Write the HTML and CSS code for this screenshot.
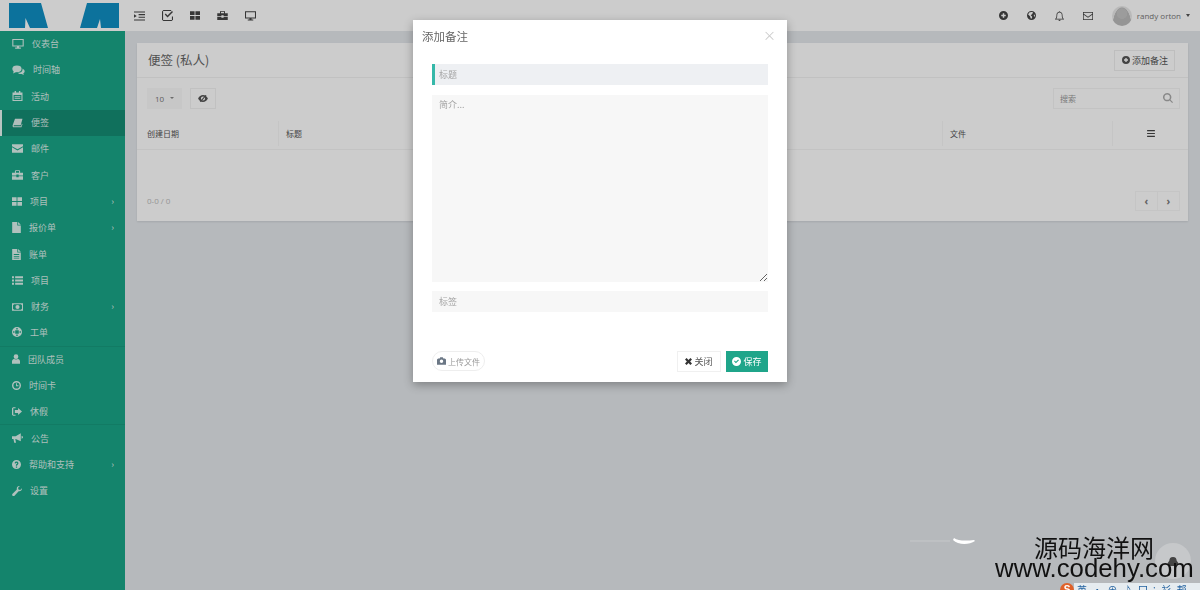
FILE: index.html
```html
<!DOCTYPE html>
<html lang="zh-CN">
<head>
  <meta charset="UTF-8">
  <title>便签 (私人)</title>
  <link rel="stylesheet" href="styles.css">
</head>
<body>

  <svg class="sprite" xmlns="http://www.w3.org/2000/svg">
    <symbol id="i-desktop" viewBox="0 0 16 14"><path fill-rule="evenodd" d="M0 0h16v10.5H9.5V12H12v1.6H4V12h2.500v-1.500H0zM1.500 1.500v7.500h13V1.500z"/></symbol>
    <symbol id="i-comments" viewBox="0 0 16 13"><ellipse cx="6" cy="5" rx="6" ry="4.500"/><path d="M2 7.500 1 11l4-2z"/><path d="M13 4.500c2 1 3 2.500 3 3.700 0 1.300-.8 2.300-1.800 3l.8 1.800-3-1.300c-2 .3-4-.2-5-1.500 4 .2 7-2.300 6-5.700z"/></symbol>
    <symbol id="i-calendar" viewBox="0 0 14 14"><path fill-rule="evenodd" d="M3 0h2v2h4V0h2v2h3v12H0V2h3zM1.500 5.500v7h11v-7z"/><path d="M3 7h8v1.200H3zM3 9.500h8v1.200H3z"/></symbol>
    <symbol id="i-book" viewBox="0 0 14 14"><path fill-rule="evenodd" d="M3.500 1H14l-2.500 9H2.200c-.6 0-.8 1.500 0 1.500H12l1-3.500 1 .5L12.500 13H1.800C.6 13-.2 11.500.2 10z"/></symbol>
    <symbol id="i-envelope" viewBox="0 0 14 11"><path d="M0 0h14v2.500L7 6.500 0 2.500z"/><path d="M0 3.800 7 8l7-4.200V11H0z"/></symbol>
    <symbol id="i-envelope-o" viewBox="0 0 14 11"><path fill-rule="evenodd" d="M0 0h14v11H0zM1 1v1.500L7 6.500l6-4V1zM1 3.700V10h12V3.700L7 7.800z"/></symbol>
    <symbol id="i-briefcase" viewBox="0 0 14 12"><path d="M4.500 0h5l.8.8V3H14v3.500H8.500V5.500h-3v1H0V3h3.700V.8zM5 1v2h4V1zM0 7.500h5.500V9h3V7.500H14V12H0z"/></symbol>
    <symbol id="i-th" viewBox="0 0 14 12"><path d="M0 0h6.400v5.400H0zM7.600 0H14v5.400H7.600zM0 6.600h6.400V12H0zM7.600 6.600H14V12H7.600z"/></symbol>
    <symbol id="i-file" viewBox="0 0 11 14"><path d="M0 0h6.500v4.500H11V14H0zM7.500 0 11 3.500H7.500z"/></symbol>
    <symbol id="i-file-text" viewBox="0 0 11 14"><path fill-rule="evenodd" d="M0 0h6.500v4.500H11V14H0zM2 6.500v1h7v-1zM2 8.800v1h7v-1zM2 11v1h7v-1z"/><path d="M7.500 0 11 3.500H7.500z"/></symbol>
    <symbol id="i-list" viewBox="0 0 14 11"><path d="M0 0h2.500v2.500H0zM4 0h10v2.500H4zM0 4.200h2.500v2.500H0zM4 4.200h10v2.500H4zM0 8.500h2.500V11H0zM4 8.500h10V11H4z"/></symbol>
    <symbol id="i-money" viewBox="0 0 16 11"><path fill-rule="evenodd" d="M0 0h16v11H0zM3 1.500 1.500 3v5L3 9.500h10L14.500 8V3L13 1.500zM8 2.500a3 3 0 1 1 0 6 3 3 0 0 1 0-6z"/></symbol>
    <symbol id="i-ring" viewBox="0 0 14 14"><path fill-rule="evenodd" d="M7 0a7 7 0 1 1 0 14A7 7 0 0 1 7 0zM4.500 4.500v5h5v-5zM6 1.500v2h2v-2zM6 10.500v2h2v-2zM1.500 6v2h2V6zM10.500 6v2h2V6z"/></symbol>
    <symbol id="i-user" viewBox="0 0 12 14"><circle cx="6" cy="3.500" r="3.500"/><path d="M0 14v-3.500C0 8.500 1.500 7 3 7c1.500 1 4.500 1 6 0 1.500 0 3 1.500 3 3.500V14z"/></symbol>
    <symbol id="i-clock" viewBox="0 0 14 14"><path fill-rule="evenodd" d="M7 0a7 7 0 1 1 0 14A7 7 0 0 1 7 0zM7 2.200a4.800 4.800 0 1 0 0 9.600 4.800 4.800 0 0 0 0-9.600z"/><path d="M6.300 3.500h1.400v3.300h2.300v1.400H6.300z"/></symbol>
    <symbol id="i-signout" viewBox="0 0 14 12"><path d="M0 1.500 1.500 0H5v1.500H1.800v9H5V12H1.500L0 10.500z"/><path d="M8.500 1 14 6l-5.500 5V8H4V4h4.500z"/></symbol>
    <symbol id="i-bullhorn" viewBox="0 0 15 13"><path d="M0 4h5l7-4v11L5 8H4.500l1 5H3L2 8H0z"/><path d="M13 3.500c1.300.5 2 1.200 2 2s-.7 1.500-2 2z"/></symbol>
    <symbol id="i-question" viewBox="0 0 14 14"><path fill-rule="evenodd" d="M7 0a7 7 0 1 1 0 14A7 7 0 0 1 7 0zM6 10v2h2v-2zM7 2.500C5.300 2.500 4.200 3.300 4 5l1.800.4c.1-.8.5-1.200 1.200-1.200.6 0 1 .3 1 .8 0 1-2 1.200-2 3.500V9h2v-.4c0-1.300 2-1.600 2-3.700 0-1.500-1.300-2.400-3-2.400z"/></symbol>
    <symbol id="i-wrench" viewBox="0 0 14 14"><path d="M13.800 3.200c.5 2.500-1.800 4.800-4.500 4L3.500 13.500c-.8.800-2 .8-2.700 0-.8-.8-.8-1.900 0-2.700l6-6C6 2.200 8.300-.4 10.800.2L8.500 2.500l.5 2.500 2.500.5z"/></symbol>
    <symbol id="i-indent" viewBox="0 0 12 10"><path d="M0 0h12v1.200H0zM5 2.900h7v1.200H5zM5 5.800h7V7H5zM0 8.800h12V10H0zM0 3l3 2-3 2z"/></symbol>
    <symbol id="i-check" viewBox="0 0 12 12"><path fill-rule="evenodd" d="M1.500 0H10v1.200H1.200v9.600h9.600V7H12v3.500L10.500 12h-9L0 10.500v-9z"/><path d="m3 5 1.100-1.100 1.900 2L10.900 1 12 2.100 6 8.100z"/></symbol>
    <symbol id="i-plus-circle" viewBox="0 0 12 12"><path fill-rule="evenodd" d="M6 0a6 6 0 1 1 0 12A6 6 0 0 1 6 0zM5 3v2H3v2h2v2h2V7h2V5H7V3z"/></symbol>
    <symbol id="i-globe" viewBox="0 0 12 12"><path fill-rule="evenodd" d="M6 0a6 6 0 1 1 0 12A6 6 0 0 1 6 0zM3 2 1.500 4.500 4 7l1 3h1.500L7 7.500 5 5.500 7 4 8 1.800C6.500 1 4.500 1 3 2zM9 5l.5 3 1-1.500V5z"/></symbol>
    <symbol id="i-bell" viewBox="0 0 12 13"><path fill-rule="evenodd" d="M6 0c.5 0 .8.3.8.8C9 1.200 10 3 10 5c0 3 .8 4.500 2 5.500V11H0v-.5C1.200 9.500 2 8 2 5c0-2 1-3.800 3.200-4.200C5.200.3 5.500 0 6 0zM6 1.800C4 1.800 3 3.200 3 5c0 2.200-.4 3.800-1.200 5h8.400C9.400 8.800 9 7.200 9 5c0-1.800-1-3.200-3-3.200z"/><path d="M4.500 11.500h3C7.500 12.400 6.800 13 6 13s-1.500-.6-1.500-1.500z"/></symbol>
    <symbol id="i-eye" viewBox="0 0 14 10"><path fill-rule="evenodd" d="M7 0c3 0 5.500 2 7 5-1.500 3-4 5-7 5S1.500 8 0 5c1.500-3 4-5 7-5zM7 2a3 3 0 1 0 0 6 3 3 0 0 0 0-6z"/><path d="M10.500 0 12 .8 4 10l-1.500-.8z"/></symbol>
    <symbol id="i-search" viewBox="0 0 12 12"><path fill-rule="evenodd" d="M5 0a5 5 0 0 1 4 8l3 3-1 1-3-3A5 5 0 1 1 5 0zM5 1.800a3.200 3.200 0 1 0 0 6.400 3.200 3.200 0 0 0 0-6.400z"/></symbol>
    <symbol id="i-bars" viewBox="0 0 10 9"><path d="M0 0h10v1.500H0zM0 3.700h10v1.500H0zM0 7.500h10V9H0z"/></symbol>
    <symbol id="i-camera" viewBox="0 0 12 10"><path fill-rule="evenodd" d="M1.500 1.500H3.500L4.300 0h3.400l.8 1.500h2L12 3v7H0V3zM6 3a2.300 2.300 0 1 0 0 4.600A2.300 2.300 0 0 0 6 3z"/></symbol>
    <symbol id="i-times" viewBox="0 0 10 10"><path d="M2.300 0 5 2.700 7.700 0 10 2.300 7.300 5 10 7.700 7.700 10 5 7.300 2.300 10 0 7.700 2.700 5 0 2.300z"/></symbol>
    <symbol id="i-check-circle" viewBox="0 0 12 12"><path fill-rule="evenodd" d="M6 0a6 6 0 1 1 0 12A6 6 0 0 1 6 0zM3.800 4.600 2.700 5.700 5.200 8.300l4.100-4-1.100-1.100-3 3z"/></symbol>
  </svg>

  <header class="topbar">
    <div class="logo">
      <svg width="110" height="25" viewBox="0 0 110 25"><path fill="#0f8fc4" d="M0 0h32l7 25H21l-4.500-10-.5 10H0zM78 0h32v25H92l-1-9-3 9H71z"/></svg>
    </div>
    <nav class="top-left">
      <svg width="11" height="10"><use href="#i-indent"/></svg>
      <svg width="11" height="11"><use href="#i-check"/></svg>
      <svg width="10" height="9"><use href="#i-th"/></svg>
      <svg width="11" height="9"><use href="#i-briefcase"/></svg>
      <svg width="11" height="10"><use href="#i-desktop"/></svg>
    </nav>
    <nav class="top-right">
      <svg width="9" height="9"><use href="#i-plus-circle"/></svg>
      <svg width="9" height="9"><use href="#i-globe"/></svg>
      <svg width="9" height="10"><use href="#i-bell"/></svg>
      <svg width="10" height="8"><use href="#i-envelope-o"/></svg>
      <div class="user">
        <span class="avatar"></span>
        <span>randy orton</span>
        <i class="caret"></i>
      </div>
    </nav>
  </header>

  <div class="main">
    <aside class="sidebar">
      <a class="side-item"><svg width="12" height="10"><use href="#i-desktop"/></svg>仪表台</a>
      <a class="side-item"><svg width="13" height="10"><use href="#i-comments"/></svg>时间轴</a>
      <a class="side-item"><svg width="11" height="10"><use href="#i-calendar"/></svg>活动</a>
      <a class="side-item active"><svg width="11" height="10"><use href="#i-book"/></svg>便签</a>
      <a class="side-item"><svg width="11" height="9"><use href="#i-envelope"/></svg>邮件</a>
      <a class="side-item"><svg width="11" height="10"><use href="#i-briefcase"/></svg>客户</a>
      <a class="side-item"><svg width="10" height="9"><use href="#i-th"/></svg>项目<span class="more">›</span></a>
      <a class="side-item"><svg width="9" height="11"><use href="#i-file"/></svg>报价单<span class="more">›</span></a>
      <a class="side-item"><svg width="9" height="11"><use href="#i-file-text"/></svg>账单</a>
      <a class="side-item"><svg width="11" height="9"><use href="#i-list"/></svg>项目</a>
      <a class="side-item"><svg width="11" height="8"><use href="#i-money"/></svg>财务<span class="more">›</span></a>
      <a class="side-item line-below"><svg width="10" height="10"><use href="#i-ring"/></svg>工单</a>
      <a class="side-item"><svg width="8" height="10"><use href="#i-user"/></svg>团队成员</a>
      <a class="side-item"><svg width="9" height="9"><use href="#i-clock"/></svg>时间卡</a>
      <a class="side-item line-below"><svg width="10" height="9"><use href="#i-signout"/></svg>休假</a>
      <a class="side-item"><svg width="11" height="10"><use href="#i-bullhorn"/></svg>公告</a>
      <a class="side-item"><svg width="9" height="9"><use href="#i-question"/></svg>帮助和支持<span class="more">›</span></a>
      <a class="side-item"><svg width="10" height="10"><use href="#i-wrench"/></svg>设置</a>
    </aside>

    <main class="content">
      <section class="card">
        <div class="card-head">
          <h1>便签 (私人)</h1>
          <button class="btn-add"><svg width="8" height="8"><use href="#i-plus-circle"/></svg>添加备注</button>
        </div>
        <div class="toolbar">
          <div class="page-size">10<i class="caret small"></i></div>
          <button class="btn-eye"><svg width="10" height="7"><use href="#i-eye"/></svg></button>
          <div class="search">
            <span>搜索</span>
            <svg width="10" height="10"><use href="#i-search"/></svg>
          </div>
        </div>
        <div class="table-head">
          <div class="th th-date">创建日期</div>
          <div class="th th-title">标题</div>
          <div class="th th-file">文件</div>
          <div class="th th-menu"><svg width="8" height="7"><use href="#i-bars"/></svg></div>
        </div>
        <div class="table-body"></div>
        <div class="card-foot">
          <span class="count">0-0 / 0</span>
          <div class="pager">
            <span>‹</span>
            <span>›</span>
          </div>
        </div>
      </section>
    </main>
  </div>

  <div class="backdrop"></div>

  <div class="modal">
    <div class="modal-head">
      <h2>添加备注</h2>
      <span class="modal-close">×</span>
    </div>
    <div class="modal-body">
      <input class="field field-title" type="text" placeholder="标题">
      <textarea class="field field-text" placeholder="简介..."></textarea>
      <input class="field" type="text" placeholder="标签">
    </div>
    <div class="modal-foot">
      <button class="btn-upload"><svg width="9" height="8"><use href="#i-camera"/></svg>上传文件</button>
      <button class="btn-close"><svg width="7" height="7"><use href="#i-times"/></svg>关闭</button>
      <button class="btn-save"><svg width="9" height="9"><use href="#i-check-circle"/></svg>保存</button>
    </div>
  </div>

  <!-- site watermark and the bits showing round it -->
  <svg class="wm-arc" width="80" height="12" viewBox="0 0 80 12">
    <path fill="none" stroke="#c6c8ca" stroke-width="1" d="M5 6h40"/>
    <path fill="#fff" d="M49 3c4 3 12 3 20 2l1 1c-6 4-17 4-22-1z"/>
  </svg>
  <span class="chat-dot">
    <svg width="12" height="9" viewBox="0 0 12 10"><path d="M6 0c3 0 4 2 4 4l2 3-3 3H3L0 7l2-3c0-2 1-4 4-4z"/></svg>
  </span>
  <div class="ime-bar">
    <span class="ime-logo">S</span>
    <span class="ime-items">英 · ⊕ ♪ 囗 ⁝ 衫 帮</span>
  </div>
  <div class="watermark">
    <div class="wm-cn">源码海洋网</div>
    <div class="wm-en">www.codehy.com</div>
  </div>

</body>
</html>
```

FILE: styles.css
```css
* {
  box-sizing: border-box;
}

body {
  margin: 0;
  height: 590px;
  overflow: hidden;
  background-color: #e4e8ec;
  color: #4a4a4a;
  font-family: "Open Sans", "Noto Sans CJK SC", sans-serif;
  font-size: 9px;
}

svg {
  fill: currentColor;
  flex: none;
}

.sprite {
  display: none;
}

/* top bar */
.topbar {
  display: flex;
  align-items: center;
  height: 31px;
  background-color: #fff;
  color: #444;
}

.logo {
  width: 125px;
  height: 31px;
  padding: 3px 0 0 9px;
}

.logo svg {
  display: block;
}

.top-left {
  display: flex;
  align-items: center;
  gap: 17px;
  padding-left: 9px;
}

.top-right {
  display: flex;
  align-items: center;
  gap: 19px;
  margin-left: auto;
  padding-right: 10px;
}

.user {
  display: flex;
  align-items: center;
  gap: 5px;
  color: #777;
  font-size: 8px;
}

.avatar {
  width: 20px;
  height: 20px;
  border-radius: 50%;
  background: radial-gradient(circle at 50% 38%, #c4c4c4 0 5px, transparent 5.5px), radial-gradient(ellipse at 50% 100%, #bbb 0 9px, #e8e8e8 9.5px);
}

.caret {
  width: 0;
  height: 0;
  border-left: 2.500px solid transparent;
  border-right: 2.500px solid transparent;
  border-top: 3px solid #555;
}

/* sidebar */
.main {
  display: flex;
  height: 559px;
}

.sidebar {
  flex: none;
  width: 125px;
  background-color: #19a687;
}

.side-item {
  display: flex;
  align-items: center;
  gap: 8px;
  height: 26.300px;
  padding: 0 11px 1px 12px;
  color: rgba(255, 255, 255, 0.85);
  font-family: "Noto Sans CJK SC", sans-serif;
  font-size: 9px;
}

.side-item.active {
  background-color: #158c73;
  border-left: 2px solid #e8f5f2;
  padding-left: 10px;
}

.side-item.line-below {
  border-bottom: 1px solid #179a7e;
}

.more {
  margin-left: auto;
  font-size: 9px;
}

/* page card */
.content {
  flex: 1;
  padding: 12px 12px 0;
}

.card {
  height: 178px;
  background-color: #fff;
  box-shadow: 0 1px 2px rgba(0, 0, 0, 0.1);
  display: flex;
  flex-direction: column;
}

.card-head {
  display: flex;
  align-items: center;
  justify-content: space-between;
  height: 35px;
  padding: 0 13px 0 11px;
  border-bottom: 1px solid #f2f2f2;
}

h1 {
  margin: 0 0 2px;
  font-family: "Noto Sans CJK SC", sans-serif;
  font-size: 12.500px;
  font-weight: 400;
  color: #666;
}

.btn-add {
  display: flex;
  align-items: center;
  gap: 2px;
  width: 61px;
  height: 21px;
  padding: 0 0 0 7px;
  border: 1px solid #eee;
  background-color: #fff;
  color: #555;
  font-family: "Noto Sans CJK SC", sans-serif;
  font-size: 9px;
}

.toolbar {
  display: flex;
  align-items: center;
  gap: 8px;
  height: 40px;
  padding: 0 8px 0 10px;
}

.page-size {
  display: flex;
  align-items: center;
  gap: 6px;
  width: 35px;
  height: 21px;
  padding-left: 8px;
  background-color: #f9f9f9;
  color: #777;
  font-size: 8px;
}

.caret.small {
  border-left-width: 2px;
  border-right-width: 2px;
  border-top-width: 2.500px;
  border-top-color: #888;
}

.btn-eye {
  display: flex;
  align-items: center;
  justify-content: center;
  width: 26px;
  height: 21px;
  padding: 0;
  border: 1px solid #f2f2f2;
  background-color: #fff;
  color: #555;
}

.search {
  display: flex;
  align-items: center;
  justify-content: space-between;
  width: 127px;
  height: 21px;
  margin-left: auto;
  padding: 0 6px;
  border: 1px solid #f4f4f4;
  color: #999;
  font-family: "Noto Sans CJK SC", sans-serif;
  font-size: 8px;
}

.search svg {
  color: #aaa;
}

.table-head {
  display: flex;
  height: 32px;
  border-bottom: 1px solid #f4f4f4;
  color: #555;
  font-family: "Noto Sans CJK SC", sans-serif;
  font-size: 8px;
}

.th {
  display: flex;
  align-items: center;
  padding-left: 7px;
  border-right: 1px solid #f7f7f7;
  margin: 3px 0;
}

.th-date {
  width: 142px;
  padding-left: 10px;
}

.th-title {
  width: 664px;
}

.th-file {
  width: 170px;
}

.th-menu {
  flex: 1;
  justify-content: center;
  padding: 0;
  border-right: 0;
  color: #444;
}

.table-body {
  height: 31px;
}

.card-foot {
  display: flex;
  align-items: center;
  justify-content: space-between;
  height: 40px;
  padding: 0 8px 1px 10px;
  color: #bbb;
  font-size: 8px;
}

.pager {
  display: flex;
  height: 20px;
  color: #777;
}

.pager span {
  display: flex;
  align-items: center;
  justify-content: center;
  width: 22.500px;
  border: 1px solid #f7f7f7;
  font-size: 10px;
  font-weight: 700;
}

.pager span + span {
  border-left: 0;
}

/* modal */
.backdrop {
  position: fixed;
  inset: 0;
  background-color: rgba(0, 0, 0, 0.2);
}

.modal {
  position: absolute;
  top: 20px;
  left: 413px;
  width: 374px;
  height: 362px;
  background-color: #fff;
  box-shadow: 0 3px 9px rgba(0, 0, 0, 0.3);
  display: flex;
  flex-direction: column;
  font-family: "Noto Sans CJK SC", sans-serif;
}

.modal-head {
  display: flex;
  align-items: center;
  justify-content: space-between;
  flex: none;
  height: 32px;
  padding: 0 11px 0 9px;
}

h2 {
  margin: 0;
  font-size: 11.500px;
  font-weight: 400;
  color: #666;
}

.modal-close {
  margin-bottom: 3px;
  color: #ccc;
  font-size: 13px;
  line-height: 1;
}

.modal-body {
  display: flex;
  flex-direction: column;
  gap: 9.500px;
  padding: 12px 19px 0;
}

.field {
  display: block;
  width: 100%;
  height: 21px;
  padding: 0 7px;
  border: 0;
  border-radius: 0;
  background-color: #f7f7f7;
  color: #555;
  font-family: "Noto Sans CJK SC", sans-serif;
  font-size: 9px;
}

.field::placeholder {
  color: #a5a5a5;
  opacity: 1;
}

.field-title {
  background-color: #eef0f3;
  border-left: 3px solid #35b8a9;
  padding-left: 4px;
}

.field-text {
  height: 187px;
  padding: 3px 7px;
  resize: vertical;
}

.modal-foot {
  display: flex;
  align-items: flex-start;
  gap: 5px;
  margin-top: auto;
  padding: 0 19px 10px;
}

.modal-foot button {
  display: flex;
  align-items: center;
  gap: 2px;
  height: 21px;
  padding: 0;
  font-family: "Noto Sans CJK SC", sans-serif;
  font-size: 9px;
}

.modal-foot .btn-upload {
  justify-content: center;
  width: 53px;
  height: 20px;
  margin-right: auto;
  border: 1px solid #eee;
  border-radius: 10px;
  background-color: #fff;
  color: #999;
  font-size: 8px;
}

.btn-upload svg {
  color: #6b7785;
}

.modal-foot .btn-close {
  justify-content: center;
  width: 44px;
  border: 1px solid #f0f0f0;
  background-color: #fff;
  color: #555;
}

.btn-close svg {
  color: #333;
}

.modal-foot .btn-save {
  justify-content: center;
  width: 42px;
  border: 0;
  background-color: #1fa58a;
  color: #fff;
}

/* watermark */
.watermark {
  position: absolute;
  right: 4px;
  bottom: 8px;
  width: 201px;
  color: #111;
  line-height: 1;
}

.wm-cn {
  padding-left: 39px;
  font-family: "Noto Sans CJK SC", sans-serif;
  font-size: 24px;
}

.wm-en {
  margin-top: -3px;
  font-family: "Liberation Sans", sans-serif;
  font-size: 25.800px;
  white-space: nowrap;
}

.wm-arc {
  position: absolute;
  top: 535px;
  left: 905px;
}

.chat-dot {
  position: absolute;
  top: 543px;
  left: 1155px;
  display: flex;
  align-items: center;
  justify-content: center;
  width: 36px;
  height: 36px;
  border-radius: 50%;
  background-color: #c6c8ca;
  color: #444;
}

.ime-bar {
  position: absolute;
  top: 583px;
  left: 1060px;
  display: flex;
  align-items: flex-start;
  width: 140px;
  height: 7px;
}

.ime-logo {
  flex: none;
  width: 14px;
  height: 14px;
  border-radius: 50%;
  background-color: #e0622a;
  color: #fff;
  font-family: "Liberation Sans", sans-serif;
  font-size: 10px;
  font-weight: 700;
  line-height: 14px;
  text-align: center;
}

.ime-items {
  flex: 1;
  height: 7px;
  overflow: hidden;
  padding-left: 3px;
  background-color: #e6ecf0;
  color: #1f5f9e;
  font-family: "Noto Sans CJK SC", sans-serif;
  font-size: 10px;
  line-height: 14px;
  white-space: nowrap;
  word-spacing: 3px;
}
```
